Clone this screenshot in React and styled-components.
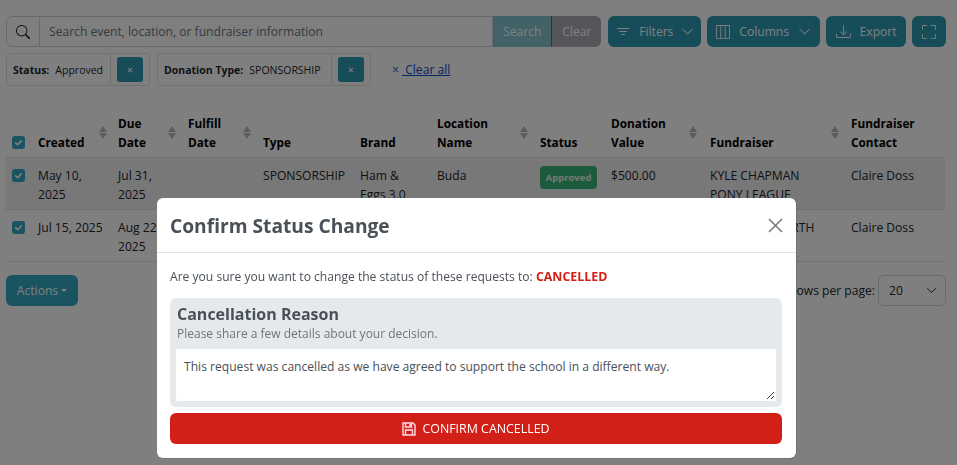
import React from "react";
import styled, { createGlobalStyle } from "styled-components";
import { BsSearch, BsFilter, BsChevronDown, BsLayoutThreeColumns, BsDownload, BsFullscreen } from "react-icons/bs";

const Global = createGlobalStyle`
  html, body { margin: 0; padding: 0; background: #fff; height: 100%; overflow: hidden; }
  body { font-family: "Open Sans", "Noto Sans", sans-serif; font-size: 12.1px; color: #212529; }
  * { box-sizing: border-box; }
`;

const TEAL = "#2f9ab3";
const TEAL2 = "#32a9c0";
const Page = styled.div`
  padding: 16px 11px 0 6px;
  width: 957px;
  height: 465px;
  overflow: hidden;
`;
const Toolbar = styled.div`
  display: flex;
  align-items: stretch;
  height: 31px;
  gap: 6px;
`;
const SearchGroup = styled.div`
  width: 596px;
  display: flex;
  margin-right: 1px;
`;
const SearchIconBox = styled.div`
  width: 34px;
  display: flex;
  align-items: center;
  justify-content: center;
  border: 1px solid #ced4da;
  border-radius: 6px 0 0 6px;
  background: #fff;
  color: #212529;
`;
const SearchInput = styled.div`
  flex: 1;
  padding: 0 9px;
  display: flex;
  align-items: center;
  border: 1px solid #ced4da;
  border-left: 0;
  background: #fff;
  color: #6c757d;
`;
const SearchBtn = styled.div`
  display: flex;
  align-items: center;
  justify-content: center;
  color: #fff;
  background: ${p => p.$clear ? "#acacb4" : "#84c4d0"};
  border-radius: ${p => p.$clear ? "0 6px 6px 0" : "0"};
  border-left: ${p => p.$clear ? "1px solid #666" : "0"};
  width: ${p => p.$clear ? "50px" : "58px"};
`;
const ToolBtn = styled.div`
  display: flex;
  align-items: center;
  justify-content: center;
  gap: ${p => p.$gap || 8}px;
  width: ${p => p.$w}px;
  border-radius: 6px;
  background: ${TEAL};
  color: #fff;
  svg { flex: none; }
`;
const Chips = styled.div`
  display: flex;
  align-items: center;
  margin-top: 6px;
  height: 33px;
  gap: 7px;
`;
const Chip = styled.div`
  display: flex;
  align-items: center;
  height: 33px;
  border: 1px solid #dee2e6;
  border-radius: 4px;
  font-size: 10.5px;
  width: ${p => p.$w}px;
`;
const ChipText = styled.div`
  flex: 1;
  padding-left: 6px;
  display: flex;
  gap: 6px;
  white-space: nowrap;
  b { font-weight: 700; }
`;
const ChipClose = styled.div`
  width: 39px;
  height: 100%;
  border-left: 1px solid #dee2e6;
  display: flex;
  align-items: center;
  justify-content: center;
`;
const ChipX = styled.div`
  width: 26px;
  height: 25px;
  border-radius: 3px;
  background: ${TEAL};
  color: #fff;
  display: flex;
  align-items: center;
  justify-content: center;
  font-size: 11px;
`;
const ClearAll = styled.div`
  margin-left: 14px;
  color: #0d47c9;
  font-size: 12.1px;
  display: flex;
  white-space: pre;
  span { text-decoration: underline; }
`;
const Table = styled.table`
  border-collapse: collapse;
  table-layout: fixed;
  width: 939px;
  margin-top: 20px;
  line-height: 19px;
`;
const Th = styled.th`
  text-align: left;
  vertical-align: bottom;
  font-size: 11.8px;
  font-weight: 700;
  padding: 8px 6px 5px;
  border-bottom: 1px solid #dee2e6;
  color: #000;
  position: relative;
`;
const Sort = styled.span`
  position: absolute;
  right: ${p => p.$r}px;
  top: 20px;
  display: flex;
  flex-direction: column;
  gap: 1px;
  i { display: block; width: 0; height: 0; border-left: 4px solid transparent; border-right: 4px solid transparent; }
  i:first-child { border-bottom: 6px solid #bbb; }
  i:last-child { border-top: 6px solid #bbb; }
`;
const Tr = styled.tr`
  background: ${p => p.$striped ? "rgba(0,0,0,.06)" : "transparent"};
`;
const Td = styled.td`
  vertical-align: top;
  padding: 8px 6px 5px;
  border-bottom: 1px solid #dee2e6;
  overflow: hidden;
  color: #212529;
`;
const Check = styled.span`
  width: 13px;
  height: 13px;
  border-radius: 3px;
  background: ${TEAL2};
  color: #fff;
  display: flex;
  align-items: center;
  justify-content: center;
  margin-top: ${p => p.$mt ?? 3}px;
  margin-bottom: ${p => p.$mb ?? 0}px;
`;
const Badge = styled.span`
  display: flex;
  align-items: center;
  justify-content: center;
  width: 57px;
  height: 23px;
  background: #38b878;
  color: #e8f5ee;
  border-radius: 4px;
  font-size: 9.5px;
  font-weight: 700;
`;
const Footer = styled.div`
  display: flex;
  justify-content: space-between;
  align-items: center;
  margin-top: 13px;
  height: 31px;
`;
const Actions = styled.div`
  width: 72px;
  height: 31px;
  border-radius: 6px;
  background: ${TEAL2};
  color: #fff;
  display: flex;
  align-items: center;
  justify-content: center;
  gap: 3px;
  &::after { content: ""; border-top: 3px solid #fff; border-left: 3px solid transparent; border-right: 3px solid transparent; }
`;
const Pager = styled.div`
  display: flex;
  align-items: center;
  gap: 3px;
  color: #212529;
`;
const Select = styled.div`
  width: 68px;
  height: 31px;
  border: 1px solid #ced4da;
  border-radius: 6px;
  display: flex;
  align-items: center;
  justify-content: space-between;
  padding: 0 8px 0 10px;
  background: #fff;
`;
const Backdrop = styled.div`
  position: fixed;
  inset: 0;
  background: rgba(0, 0, 0, 0.5);
`;
const Modal = styled.div`
  position: fixed;
  left: 157px;
  top: 198px;
  width: 639px;
  height: 260px;
  background: #fff;
  border-radius: 6px;
  box-shadow: 0.5px 0.5px 0 0 rgba(0,0,0,.2);
  display: flex;
  flex-direction: column;
`;
const ModalHeader = styled.div`
  height: 55px;
  border-bottom: 1px solid #dee2e6;
  display: flex;
  align-items: center;
  justify-content: space-between;
  padding: 0 13px;
`;
const ModalTitle = styled.div`
  font-size: 19.2px;
  font-weight: 700;
  color: #495057;
`;
const ModalBody = styled.div`
  padding: 14px 14px 13px 13px;
  display: flex;
  flex-direction: column;
  color: #495057;
`;
const Prompt = styled.div`
  line-height: 19px;
  strong { color: #d21f17; font-weight: 700; font-size: 12.4px; }
`;
const ReasonBox = styled.div`
  margin-top: 12px;
  background: #e6e9ec;
  border-radius: 6px;
  padding: 6px 6px 6px;
  height: 109px;
`;
const ReasonTitle = styled.div`
  padding-left: 1px;
  font-size: 16px;
  line-height: 20px;
  font-weight: 700;
  color: #495057;
`;
const ReasonHint = styled.div`
  font-size: 12px;
  line-height: 19px;
  color: #6c757d;
  padding-left: 1px;
  margin-bottom: 6px;
`;
const Reason = styled.div`
  position: relative;
  height: 52px;
  background: #fff;
  border-radius: 2px;
  padding: 8px 8px;
  line-height: 19px;
  color: #495057;
  svg { position: absolute; right: 1px; bottom: 1px; }
`;
const ConfirmBtn = styled.div`
  margin-top: 6px;
  height: 31px;
  border-radius: 6px;
  background: #d21f17;
  color: #fff;
  font-size: 12.4px;
  display: flex;
  align-items: center;
  justify-content: center;
  gap: 6px;
`;
const Close = styled.svg`
  width: 15px;
  height: 15px;
  stroke: #777;
  stroke-width: 1.5;
`;

const cols = [26, 80, 70, 75, 97, 77, 103, 71, 99, 141, 100];
const tick = (
  <svg width="9" height="9" viewBox="0 0 16 16" fill="none" stroke="currentColor" strokeWidth="3" strokeLinecap="round" strokeLinejoin="round">
    <path d="M3 8.5l3.5 3.5L13 5" />
  </svg>
);
const SortIcon = ({ r }) => <Sort $r={r}><i /><i /></Sort>;
const SaveIcon = () => (
  <svg width="14" height="14" viewBox="0 0 14 14" fill="none" stroke="#ffdce6" strokeWidth="1.4">
    <path d="M1 1h10l2 2v10H1z" />
    <path d="M3.5 1v4h6V1M8 2v2" />
    <path d="M3.5 13V8h7v5" />
  </svg>
);

export default function App() {
  return (
    <>
      <Global />
      <Page>
        <Toolbar>
          <SearchGroup>
            <SearchIconBox><BsSearch size={14} /></SearchIconBox>
            <SearchInput>Search event, location, or fundraiser information</SearchInput>
            <SearchBtn>Search</SearchBtn>
            <SearchBtn $clear>Clear</SearchBtn>
          </SearchGroup>
          <ToolBtn $w={93}><BsFilter size={16} />Filters<BsChevronDown size={13} /></ToolBtn>
          <ToolBtn $w={113} $gap={9}><BsLayoutThreeColumns size={14} />Columns<BsChevronDown size={13} /></ToolBtn>
          <ToolBtn $w={80} $gap={9}><BsDownload size={15} />Export</ToolBtn>
          <ToolBtn $w={34}><BsFullscreen size={14} /></ToolBtn>
        </Toolbar>
        <Chips>
          <Chip $w={144}>
            <ChipText><b>Status:</b>Approved</ChipText>
            <ChipClose><ChipX>×</ChipX></ChipClose>
          </Chip>
          <Chip $w={214}>
            <ChipText><b>Donation Type:</b>SPONSORSHIP</ChipText>
            <ChipClose><ChipX>×</ChipX></ChipClose>
          </Chip>
          <ClearAll>× <span> Clear all</span></ClearAll>
        </Chips>
        <Table>
          <colgroup>{cols.map((w, i) => <col key={i} style={{ width: w }} />)}</colgroup>
          <thead>
            <tr>
              <Th><Check $mt={0} $mb={3}>{tick}</Check></Th>
              <Th>Created<SortIcon r={5} /></Th>
              <Th>Due<br />Date<SortIcon r={6} /></Th>
              <Th>Fulfill<br />Date<SortIcon r={6} /></Th>
              <Th>Type</Th>
              <Th>Brand</Th>
              <Th>Location<br />Name<SortIcon r={6} /></Th>
              <Th>Status</Th>
              <Th>Donation<br />Value<SortIcon r={7} /></Th>
              <Th>Fundraiser<SortIcon r={6} /></Th>
              <Th>Fundraiser<br />Contact</Th>
            </tr>
          </thead>
          <tbody>
            <Tr $striped>
              <Td><Check>{tick}</Check></Td>
              <Td>May 10,<br />2025</Td>
              <Td>Jul 31,<br />2025</Td>
              <Td></Td>
              <Td>SPONSORSHIP</Td>
              <Td>Ham &amp;<br />Eggs 3.0</Td>
              <Td>Buda</Td>
              <Td><Badge>Approved</Badge></Td>
              <Td>$500.00</Td>
              <Td>KYLE CHAPMAN<br />PONY LEAGUE</Td>
              <Td>Claire Doss</Td>
            </Tr>
            <Tr>
              <Td><Check>{tick}</Check></Td>
              <Td>Jul 15, 2025</Td>
              <Td>Aug 22,<br />2025</Td>
              <Td></Td>
              <Td>SPONSORSHIP</Td>
              <Td>Ham &amp;<br />Eggs 3.0</Td>
              <Td>Buda</Td>
              <Td><Badge>Approved</Badge></Td>
              <Td>$500.00</Td>
              <Td>NORTH FT WORTH</Td>
              <Td>Claire Doss</Td>
            </Tr>
          </tbody>
        </Table>
        <Footer>
          <Actions>Actions</Actions>
          <Pager>Rows per page:<Select>20<BsChevronDown size={11} /></Select></Pager>
        </Footer>
      </Page>
      <Backdrop />
      <Modal>
        <ModalHeader>
          <ModalTitle>Confirm Status Change</ModalTitle>
          <Close viewBox="0 0 15 15"><path d="M1 1l13 13M14 1L1 14" /></Close>
        </ModalHeader>
        <ModalBody>
          <Prompt>Are you sure you want to change the status of these requests to: <strong>CANCELLED</strong></Prompt>
          <ReasonBox>
            <ReasonTitle>Cancellation Reason</ReasonTitle>
            <ReasonHint>Please share a few details about your decision.</ReasonHint>
            <Reason>
              This request was cancelled as we have agreed to support the school in a different way.
              <svg width="9" height="9" viewBox="0 0 9 9" stroke="#444" strokeWidth="1"><path d="M8 1L1 8M8 5L5 8" /></svg>
            </Reason>
          </ReasonBox>
          <ConfirmBtn><SaveIcon />CONFIRM CANCELLED</ConfirmBtn>
        </ModalBody>
      </Modal>
    </>
  );
}
